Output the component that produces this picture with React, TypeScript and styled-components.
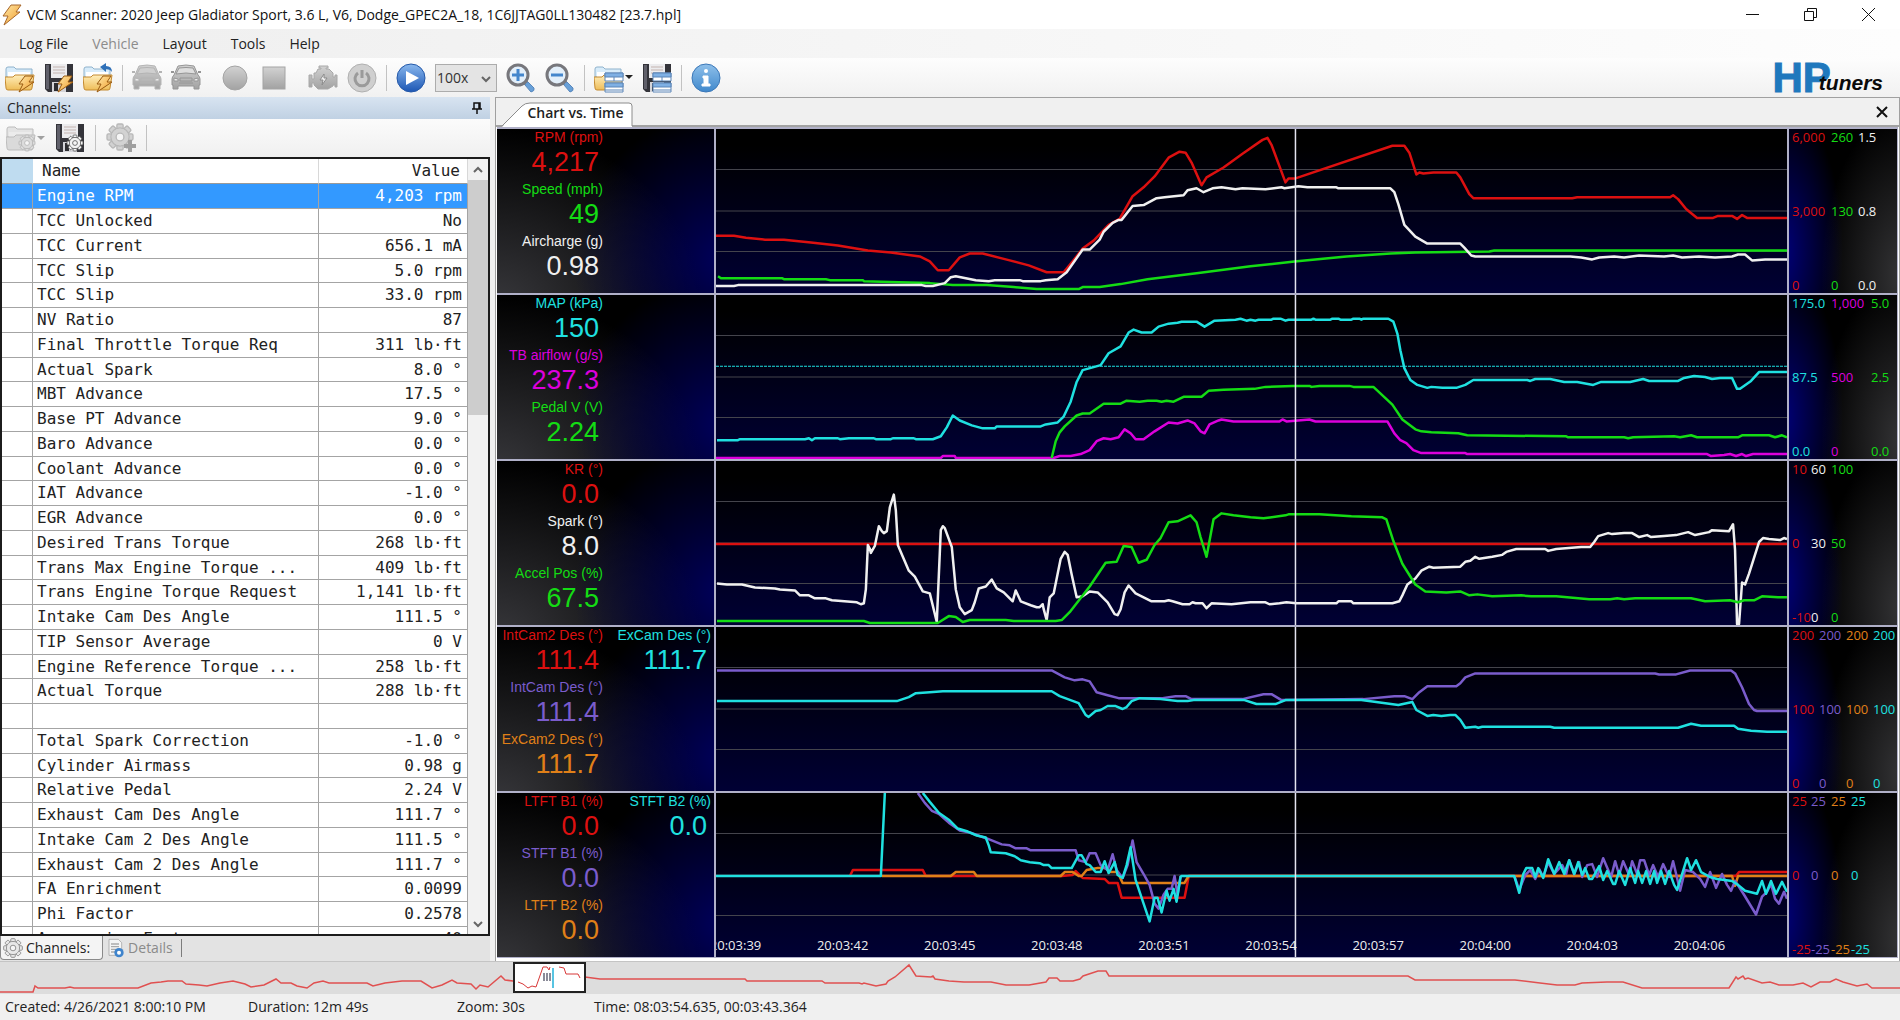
import React from "react";
import styled, { createGlobalStyle } from "styled-components";

const RED = "#dc1010";
const GREEN = "#14dc14";
const WHITE = "#f0f0f0";
const CYAN = "#1fe0e0";
const MAGENTA = "#dc00dc";
const PURPLE = "#7a5ccc";
const ORANGE = "#e08018";
const UI_FONT = `"Open Sans", "Noto Sans", sans-serif`;
const CHART_FONT = `"Liberation Sans", Arial, sans-serif`;
const MONO_FONT = `"DejaVu Sans Mono", monospace`;

const GlobalStyle = createGlobalStyle`
  *, *::before, *::after { box-sizing: border-box; }
  body { margin: 0; background: #f0f0f0; font-family: ${UI_FONT}; font-size: 14px; line-height: 18px; color: #222; }
  button, select { font: inherit; color: inherit; }
  button { padding: 0; border: 0; background: none; }
  svg { display: block; }
  h1, h2, ul, dl, dd, dt { margin: 0; padding: 0; font: inherit; }
`;

/* ---------- window frame ---------- */

const Window = styled.div`
  display: flex;
  flex-direction: column;
  height: 100vh;
  overflow: hidden;
`;

const TitleBar = styled.header`
  display: flex;
  align-items: center;
  gap: 5px;
  flex: 0 0 29px;
  padding: 0 3px 0 2px;
  background: #fff;
  color: #111;
`;

const Title = styled.h1`
  flex: 1;
  white-space: nowrap;
`;

const WindowControls = styled.div`
  display: flex;
`;

const WindowButton = styled.button`
  display: grid;
  place-items: center;
  width: 58px;
  height: 29px;
`;

const MenuBar = styled.nav`
  display: flex;
  align-items: center;
  gap: 24px;
  flex: 0 0 29px;
  padding-left: 19px;
  background: linear-gradient(to right, #f0f0f0 10%, #fdfdfd);
`;

const MenuItem = styled.button`
  &:disabled { color: #8c8c8c; }
`;

const Toolbar = styled.div`
  display: flex;
  align-items: center;
  gap: 9px;
  flex: 0 0 39px;
  padding: 0 17px 0 5px;
  background: linear-gradient(#fdfdfd, #f1f1f1);
`;

const ToolButton = styled.button<{ $menu?: boolean; $spaced?: boolean }>`
  display: flex;
  align-items: center;
  gap: 1px;
  width: ${(p) => (p.$menu ? 39 : 30)}px;
  height: 30px;
  margin-left: ${(p) => (p.$spaced ? 10 : 0)}px;
  &:disabled { color: #a0a0a0; }
`;

const Separator = styled.span`
  width: 1px;
  height: 26px;
  background: #c2c2c2;
`;

const SpeedSelect = styled.select`
  display: block;
  width: 62px;
  height: 28px;
  padding: 0 0 0 1px;
  border: 1px solid #acacac;
  border-radius: 0;
  appearance: none;
  background: #e4e4e4;
  color: #333;
`;

const SelectWrap = styled.div`
  position: relative;
  svg { position: absolute; right: 5px; top: 11px; pointer-events: none; }
`;

const Logo = styled.div`
  display: flex;
  align-items: flex-end;
  height: 32px;
  margin-left: auto;
  font-family: ${CHART_FONT};
  font-weight: 700;
`;

const LogoMain = styled.span`
  font-size: 42px;
  line-height: 32px;
  color: #1f78bd;
  -webkit-text-stroke: 1px #1f78bd;
`;

const LogoSub = styled.span`
  margin-left: -12px;
  font-size: 21px;
  line-height: 22px;
  font-style: italic;
  color: #0a0a0a;
`;

const Workspace = styled.main`
  display: flex;
  flex: 1;
  min-height: 0;
  gap: 5px;
`;

/* ---------- channels ---------- */

const ChannelsPane = styled.section`
  display: flex;
  flex-direction: column;
  flex: 0 0 490px;
  min-height: 0;
`;

const PaneHeader = styled.div`
  display: flex;
  align-items: center;
  justify-content: space-between;
  flex: 0 0 22px;
  padding: 0 7px;
  background: linear-gradient(#d8e4f1, #c0d1e3);
`;

const PaneToolbar = styled.div`
  display: flex;
  align-items: center;
  gap: 10px;
  flex: 0 0 38px;
  padding-left: 6px;
  background: linear-gradient(#fbfbfb, #f0f0f0);
`;

const TableFrame = styled.div`
  display: flex;
  flex: 1;
  min-height: 0;
  border: 2px solid #1c1c1c;
  background: #fff;
  overflow: hidden;
`;

const ChannelTable = styled.table`
  flex: 1;
  align-self: flex-start;
  table-layout: fixed;
  border-collapse: separate;
  border-spacing: 0;
  font-family: ${MONO_FONT};
  font-size: 16px;
  line-height: 22px;
  color: #222;
`;

const HeadCell = styled.th<{ $right?: boolean; $corner?: boolean }>`
  height: 25px;
  padding: 0 ${(p) => (p.$right ? 7 : 0)}px 0 9px;
  border-right: 1px solid ${(p) => (p.$corner ? "#bfdcf0" : "#d8d8d8")};
  border-bottom: 1px solid #9a9a9a;
  background: ${(p) => (p.$corner ? "#bfdcf0" : "#fff")};
  font-weight: 400;
  text-align: ${(p) => (p.$right ? "right" : "left")};
`;

const Row = styled.tr<{ $selected?: boolean }>`
  height: 25px;
  background: ${(p) => (p.$selected ? "#3399ff" : "#fff")};
  color: ${(p) => (p.$selected ? "#fff" : "inherit")};
  &:nth-child(4n) { height: 24px; }
`;

const Cell = styled.td<{ $right?: boolean }>`
  padding: 0 5px 0 4px;
  border-right: 1px solid #a4a4a4;
  border-bottom: 1px solid #a4a4a4;
  text-align: ${(p) => (p.$right ? "right" : "left")};
  white-space: nowrap;
`;

const ScrollBar = styled.div`
  display: flex;
  flex-direction: column;
  flex: 0 0 20px;
  background: #f2f2f2;
`;

const ScrollArrow = styled.button`
  display: grid;
  place-items: center;
  height: 21px;
`;

const ScrollTrack = styled.div`
  flex: 1;
`;

const ScrollThumb = styled.div`
  height: 32%;
  background: #cdcdcd;
`;

const PaneTabs = styled.div`
  display: flex;
  flex: 0 0 25px;
  align-items: stretch;
  background: #e3e3e3;
`;

const PaneTab = styled.button<{ $active?: boolean }>`
  display: flex;
  align-items: center;
  gap: 3px;
  height: 24px;
  padding: 0 ${(p) => (p.$active ? 12 : 8)}px 0 2px;
  border: ${(p) => (p.$active ? "1px solid #8a8a8a" : "0 solid #8a8a8a")};
  border-top: 0;
  border-radius: 0 0 4px 4px;
  background: ${(p) => (p.$active ? "#f4f4f4" : "none")};
  color: ${(p) => (p.$active ? "#222" : "#8a8a8a")};
`;

const TabRule = styled.span`
  width: 1px;
  height: 18px;
  margin-top: 3px;
  background: #7c7c7c;
`;

/* ---------- chart ---------- */

const ChartPane = styled.section`
  display: flex;
  flex-direction: column;
  flex: 1;
  min-width: 0;
  border: 1px solid #a0a0a0;
  border-bottom: 0;
  background: #fff;
`;

const ChartTabs = styled.div`
  display: flex;
  align-items: flex-end;
  justify-content: space-between;
  flex: 0 0 29px;
  padding: 0 8px 0 6px;
  border-bottom: 2px solid #a2a2a2;
  background: #f0f0f0;
`;

const ChartTab = styled.button`
  position: relative;
  width: 131px;
  height: 25px;
  margin-bottom: -2px;
  padding: 0 2px 3px 18px;
  font-weight: 600;
  white-space: nowrap;
  svg { position: absolute; left: 0; top: 0; z-index: 0; }
  span { position: relative; }
`;

const CloseButton = styled.button`
  display: grid;
  place-items: center;
  width: 18px;
  height: 26px;
`;

const ChartBody = styled.div`
  display: flex;
  flex-direction: column;
  flex: 1;
  min-height: 0;
  margin: 0 1px 3px;
`;

const Panel = styled.article`
  display: grid;
  grid-template-columns: 217px minmax(0, 1fr) 108px;
  flex: 1;
  min-height: 0;
  border-top: 2px solid #b0b0c8;
  border-right: 1px solid #b0b0c8;
  background: #000;
  font-family: ${CHART_FONT};
  &:last-child { border-bottom: 1px solid #b0b0c8; }
`;

const Legend = styled.dl`
  display: grid;
  grid-template-columns: 108px 108px;
  grid-template-rows: 52px 52px 52px;
  grid-auto-flow: column;
  overflow: hidden;
  background:
    radial-gradient(ellipse 70% 90% at 105% 80%, #00005c, transparent),
    radial-gradient(ellipse 95% 110% at 0% 110%, #38383c, transparent),
    #000;
`;

const LegendItem = styled.div<{ $color: string }>`
  color: ${(p) => p.$color};
  text-align: right;
  white-space: nowrap;
`;

const LegendName = styled.dt`
  padding-right: 2px;
  font-size: 14px;
  line-height: 16px;
`;

const LegendValue = styled.dd`
  padding-right: 6px;
  font-size: 27px;
  line-height: 34px;
`;

const Plot = styled.div`
  position: relative;
  min-width: 0;
  min-height: 0;
  border: solid #b0b0c8;
  border-width: 0 2px;
  background: linear-gradient(#000 10%, #000034);
  overflow: hidden;
`;

const PlotSvg = styled.svg`
  position: absolute;
  inset: 0;
  width: 100%;
  height: 100%;
`;

const TimeAxis = styled.ul`
  position: absolute;
  left: -34px;
  right: 34px;
  bottom: 3px;
  display: flex;
  list-style: none;
  font-family: ${UI_FONT};
  font-size: 13px;
  color: #eee;
  li { flex: 0 0 10%; text-align: center; }
`;

const Scales = styled.div`
  display: flex;
  flex-direction: column;
  justify-content: space-between;
  padding-left: 3px;
  overflow: hidden;
  font-family: ${UI_FONT};
  font-size: 13px;
  line-height: 16px;
  background:
    radial-gradient(ellipse 55% 90% at -5% 75%, #000078, transparent),
    radial-gradient(ellipse 75% 100% at 105% 90%, #343436, transparent),
    #000;
`;

const ScaleRow = styled.div<{ $columns: string }>`
  display: grid;
  grid-template-columns: ${(p) => p.$columns};
  white-space: nowrap;
`;

const ScaleValue = styled.span<{ $color: string }>`
  color: ${(p) => p.$color};
`;

/* ---------- footer ---------- */

const Overview = styled.div`
  position: relative;
  flex: 0 0 33px;
  border-top: 1px solid #c4c4c4;
  background: #dddddd;
`;

const OverviewSvg = styled.svg`
  width: 100%;
  height: 32px;
`;

const OverviewWindow = styled.div`
  position: absolute;
  left: 27%;
  top: 0;
  width: 73px;
  height: 31px;
  border: 2px solid #222;
  background: #fff;
`;

const StatusBar = styled.footer`
  display: grid;
  grid-template-columns: 243px 209px 137px 1fr;
  align-items: center;
  flex: 0 0 26px;
  padding-left: 5px;
`;

/* ---------- icons ---------- */

const DefsSvg = styled.svg`
  position: absolute;
`;

const Defs = () => (
  <DefsSvg width="0" height="0" aria-hidden="true">
    <defs>
      <linearGradient id="bolt" x1="0" y1="0" x2="1" y2="1">
        <stop offset="0" stopColor="#ffe9a8" />
        <stop offset="1" stopColor="#f09a28" />
      </linearGradient>
      <linearGradient id="folder" x1="0" y1="0" x2="0" y2="1">
        <stop offset="0" stopColor="#ffeebc" />
        <stop offset="1" stopColor="#eebd58" />
      </linearGradient>
      <linearGradient id="grey" x1="0" y1="0" x2="0" y2="1">
        <stop offset="0" stopColor="#d2d2d2" />
        <stop offset="1" stopColor="#a2a2a2" />
      </linearGradient>
      <linearGradient id="blue" x1="0" y1="0" x2="0" y2="1">
        <stop offset="0" stopColor="#8ab8ee" />
        <stop offset="1" stopColor="#1c56b4" />
      </linearGradient>
      <linearGradient id="sky" x1="0" y1="0" x2="0" y2="1">
        <stop offset="0" stopColor="#8fc0ea" />
        <stop offset="1" stopColor="#3f88cc" />
      </linearGradient>
    </defs>
  </DefsSvg>
);

const Bolt = () => (
  <path d="M20 13h8l-4 6h5L14 29l4-8h-4z" fill="url(#bolt)" stroke="#9a5a10" strokeLinejoin="round" />
);

type GearProps = { x: number; y: number; r: number; fill: string; stroke: string };

const Gear = ({ x, y, r, fill, stroke }: GearProps) => (
  <g transform={`translate(${x} ${y}) scale(${r / 10})`}>
    {[0, 45, 90, 135].map((a) => (
      <rect key={a} x="-2.4" y="-10" width="4.8" height="20" rx="1" fill={fill} stroke={stroke} transform={`rotate(${a})`} />
    ))}
    <circle r="7" fill={fill} stroke={stroke} />
    <circle r="6.4" fill={fill} />
    <circle r="3" fill="#f6f6f6" stroke={stroke} />
  </g>
);

const FolderShape = ({ muted }: { muted?: boolean }) => (
  <g stroke={muted ? "#bcbcbc" : "#8fb2cc"} strokeLinejoin="round">
    <path d="M1 6q0-2 2-2h6l2 2h16v8H1z" fill={muted ? "#e4e4e4" : "#d8ecfa"} />
    <path d="M3 9h22v6H3z" fill={muted ? "#ececec" : "#fff"} stroke="none" />
    <path d="M0 14h8l2-2h19l-2 13q0 2-2 2H3q-2 0-2-2z" fill={muted ? "#dadada" : "url(#folder)"} stroke={muted ? "#bcbcbc" : "#c48a30"} />
  </g>
);

const FloppyShape = () => (
  <g>
    <path d="M1 1h28v28H4l-3-3z" fill="#34343a" />
    <path d="M2 2h3v24H2z" fill="#60606a" />
    <path d="M7 1h16v14H7z" fill="#ececee" />
    <path d="M9 4h12M9 7h12M9 10h12" stroke="#c4b4b0" />
    <path d="M8 19h14v10H8z" fill="#d4d4d8" />
    <path d="M10 20h4v8h-4z" fill="#2c2c30" />
  </g>
);

const TableShape = () => (
  <g stroke="#5c86b8">
    <path d="M11 10h18v8H11zM11 20h18v9H11z" fill="#fff" />
    <path d="M11 10h18v4H11zM11 20h18v4H11z" fill="#7fb0e4" />
    <path d="M20 14v4M11 27h18" />
  </g>
);

const Icon = ({ children, size = 30 }: { children: React.ReactNode; size?: number }) => (
  <svg width={size} height={size} viewBox="0 0 30 30" fill="none" aria-hidden="true">
    {children}
  </svg>
);

const Car = ({ dark }: { dark?: boolean }) => (
  <Icon>
    <g stroke={dark ? "#969696" : "#b4b4b4"}>
      <path d="M7 3q8-2 16 0l4 9q2 2 2 4v6h-1v4h-5v-3H7v3H2v-4H1v-6q0-2 2-4z" fill="url(#grey)" />
      <path d="M8 5q7-1 14 0l3 6q-10-2-20 0z" fill={dark ? "#dedede" : "#cfcfcf"} />
      <path d="M0 9h3M27 9h3" strokeWidth="2" />
      <path d="M9 15h12v3H9zM8 20h14" fill="#b8b8b8" />
      <path d="M3 15l4 1v2H3zM27 15l-4 1v2h4z" fill="#ececec" />
    </g>
  </Icon>
);

const Magnifier = ({ plus }: { plus?: boolean }) => (
  <Icon>
    <path d="M17 20l3-3 2 2-3 3z" fill="#c8c8c8" stroke="#888" />
    <path d="M19 22q0-3 3-3l6 6q1 3-3 4z" fill="#68a0d8" stroke="#5a88bc" />
    <circle cx="12" cy="12" r="10" fill="#e3effa" stroke="#77777c" strokeWidth="3" />
    <path d={plus ? "M6 12h12M12 6v12" : "M6 12h12"} stroke="#4486cc" strokeWidth="3" />
  </Icon>
);

const Caret = () => (
  <svg width="8" height="5" viewBox="0 0 8 5" aria-hidden="true">
    <path d="M0 0h8L4 4z" fill="currentColor" />
  </svg>
);

const Chevron = ({ up, size = 12 }: { up?: boolean; size?: number }) => (
  <svg width={size} height="8" viewBox="0 0 12 8" fill="none" aria-hidden="true">
    <path d={up ? "M2 6l4-4 4 4" : "M2 2l4 4 4-4"} stroke="#666" strokeWidth="2" />
  </svg>
);

/* ---------- data ---------- */

const channels: [string, string][] = [
  ["Engine RPM", "4,203 rpm"],
  ["TCC Unlocked", "No"],
  ["TCC Current", "656.1 mA"],
  ["TCC Slip", "5.0 rpm"],
  ["TCC Slip", "33.0 rpm"],
  ["NV Ratio", "87"],
  ["Final Throttle Torque Req", "311 lb·ft"],
  ["Actual Spark", "8.0 °"],
  ["MBT Advance", "17.5 °"],
  ["Base PT Advance", "9.0 °"],
  ["Baro Advance", "0.0 °"],
  ["Coolant Advance", "0.0 °"],
  ["IAT Advance", "-1.0 °"],
  ["EGR Advance", "0.0 °"],
  ["Desired Trans Torque", "268 lb·ft"],
  ["Trans Max Engine Torque ...", "409 lb·ft"],
  ["Trans Engine Torque Request", "1,141 lb·ft"],
  ["Intake Cam Des Angle", "111.5 °"],
  ["TIP Sensor Average", "0 V"],
  ["Engine Reference Torque ...", "258 lb·ft"],
  ["Actual Torque", "288 lb·ft"],
  ["", ""],
  ["Total Spark Correction", "-1.0 °"],
  ["Cylinder Airmass", "0.98 g"],
  ["Relative Pedal", "2.24 V"],
  ["Exhaust Cam Des Angle", "111.7 °"],
  ["Intake Cam 2 Des Angle", "111.5 °"],
  ["Exhaust Cam 2 Des Angle", "111.7 °"],
  ["FA Enrichment", "0.0099"],
  ["Phi Factor", "0.2578"],
  ["Aggression Factor", "40"],
];

type Trace = { color: string; d: string; dashed?: boolean };
type PanelData = {
  legend: [string, string, string][];
  columns: string;
  scales: string[][];
  traces: Trace[];
};

const panels: PanelData[] = [
  {
    legend: [["RPM (rpm)", "4,217", RED], ["Speed (mph)", "49", GREEN], ["Aircharge (g)", "0.98", WHITE]],
    columns: "39px 27px 27px",
    scales: [["6,000", "260", "1.5"], ["3,000", "130", "0.8"], ["0", "0", "0.0"]],
    traces: [
      { color: RED, d: "0,108 18,108 30,110 49,112 68,112 95,115 122,118 152,123 175,125 204,129 214,134 222,143 233,143 244,130 254,126 267,126 290,132 313,138 331,145 348,145 357,134 367,121 378,113 393,97 404,91 417,68 428,59 439,48 453,29 464,23 470,24 476,34 486,57 491,49 508,39 527,25 547,11 552,9 556,16 570,54 573,50 580,50 677,17 689,17 694,24 701,46 704,44 708,45 718,44 741,44 745,49 754,66 758,70 857,70 862,69 955,69 958,67 963,71 971,81 982,90 998,90 1003,88 1017,88 1022,91 1027,87 1032,90 1072,90" },
      { color: GREEN, d: "2,149 5,151 66,151 68,152 110,152 114,153 147,153 148,154 183,155 214,156 237,158 271,158 298,160 321,162 363,162 367,160 384,160 405,157 432,152 481,146 535,139 579,134 631,129 675,126 700,125 774,124 779,123 1072,123" },
      { color: WHITE, d: "0,159 18,159 22,158 206,158 210,159 217,159 229,156 235,150 240,149 250,151 260,153 273,154 279,153 304,153 307,154 325,154 330,153 342,152 351,145 367,122 374,122 384,112 388,104 397,95 403,92 406,92 417,78 428,77 441,70 449,69 468,67 472,62 481,60 488,64 497,60 506,59 520,61 527,60 550,61 566,59 569,60 583,58 592,59 621,59 623,60 675,60 679,64 683,76 689,97 700,109 712,116 745,116 749,120 756,128 760,129 855,129 866,130 877,132 884,130 899,129 909,130 924,128 949,129 958,128 967,130 984,129 1000,130 1017,129 1023,127 1030,127 1037,133 1050,132 1072,132" },
    ],
  },
  {
    legend: [["MAP (kPa)", "150", CYAN], ["TB airflow (g/s)", "237.3", MAGENTA], ["Pedal V (V)", "2.24", GREEN]],
    columns: "39px 40px 27px",
    scales: [["175.0", "1,000", "5.0"], ["87.5", "500", "2.5"], ["0.0", "0", "0.0"]],
    traces: [
      { color: CYAN, dashed: true, d: "0,72 1072,72" },
      { color: MAGENTA, d: "0,165 225,165 227,163 239,163 240,165 338,165 344,163 355,163 365,161 374,157 381,148 388,145 395,146 403,144 409,136 415,140 420,146 428,146 439,138 453,129 462,130 472,127 479,130 485,138 489,140 494,131 503,127 506,126 518,128 564,128 567,126 571,128 594,126 600,128 672,128 679,140 685,147 691,150 698,157 706,160 750,160 752,161 992,161 996,163 1009,162 1015,161 1021,163 1027,161 1031,163 1038,161 1072,161" },
      { color: CYAN, d: "1,147 22,147 24,146 89,146 93,145 96,147 99,145 122,145 124,146 133,145 158,145 160,146 175,146 177,145 198,145 200,146 217,146 225,143 231,134 237,122 244,127 256,132 267,135 279,135 281,133 325,133 330,131 342,129 348,123 355,108 361,88 367,76 378,73 385,71 393,59 405,52 413,38 418,35 426,38 436,38 443,32 453,29 462,28 466,27 481,27 489,32 499,26 520,25 525,24 531,26 535,25 540,26 543,25 556,25 558,24 565,24 570,26 573,25 596,25 598,24 600,25 615,25 617,24 623,24 625,25 636,25 638,24 644,24 646,25 648,24 673,24 678,27 682,39 685,56 689,74 695,86 702,91 712,94 716,93 727,94 741,94 750,91 758,86 812,86 815,87 820,85 835,85 849,88 862,88 878,91 886,88 915,88 928,85 934,87 963,87 969,84 979,82 990,83 997,85 1005,84 1017,84 1022,95 1025,95 1036,87 1044,78 1072,78" },
      { color: GREEN, d: "336,165 340,148 344,139 349,133 361,122 367,120 374,120 388,110 405,110 411,107 424,108 432,107 441,107 446,108 451,107 458,108 468,103 486,103 493,97 508,96 539,95 550,93 577,92 594,92 596,93 604,92 634,92 638,93 658,93 677,111 687,126 700,136 706,138 716,139 743,140 752,142 851,143 853,144 909,144 913,145 918,144 959,143 965,144 976,142 982,144 1023,144 1027,142 1054,142 1060,144 1067,142 1072,144" },
    ],
  },
  {
    legend: [["KR (°)", "0.0", RED], ["Spark (°)", "8.0", WHITE], ["Accel Pos (%)", "67.5", GREEN]],
    columns: "19px 20px 27px",
    scales: [["10", "60", "100"], ["0", "30", "50"], ["-10", "0", "0"]],
    traces: [
      { color: RED, d: "0,84 1072,84" },
      { color: WHITE, d: "1,124 11,125 26,125 39,128 59,129 64,130 79,131 84,136 93,136 99,139 110,139 116,141 141,143 145,145 148,144 150,130 152,85 154,89 155,93 159,86 163,66 166,71 168,73 171,71 174,47 178,34 180,50 182,85 187,97 193,111 199,117 207,132 214,134 221,163 225,70 227,66 229,68 236,87 240,130 244,148 249,155 256,151 259,143 263,129 270,127 276,120 281,129 288,133 297,142 300,131 305,142 315,146 321,148 324,148 327,145 328,150 331,161 334,138 338,134 345,99 349,92 352,95 356,115 361,138 367,137 374,132 382,133 392,143 399,155 402,156 405,150 409,133 413,126 420,134 436,142 449,142 453,141 457,142 467,145 474,145 477,143 480,144 487,144 491,149 496,144 516,145 535,143 550,143 554,145 564,144 571,143 581,144 621,144 623,142 636,142 638,144 677,144 684,142 687,136 692,125 700,119 706,111 714,107 718,108 745,107 750,102 755,101 760,97 764,99 777,97 787,95 791,92 801,89 830,89 833,91 841,89 866,87 875,87 879,82 883,76 893,73 897,74 909,73 917,73 924,77 932,75 936,77 949,76 961,75 973,72 980,75 994,72 997,70 1014,71 1018,64 1020,90 1022,165 1024,165 1027,123 1030,125 1034,114 1044,82 1048,78 1054,79 1065,80 1069,78 1072,79" },
      { color: GREEN, d: "1,162 148,162 154,164 222,164 233,157 240,158 247,163 254,161 290,161 298,162 340,162 346,161 354,153 374,127 390,103 401,102 408,86 416,87 423,103 431,100 439,85 445,78 453,62 462,61 475,55 481,62 485,77 491,97 498,59 506,53 518,55 535,57 548,58 570,55 573,54 604,54 636,56 667,57 671,59 678,81 687,104 700,125 710,132 731,133 745,132 754,136 762,135 777,137 806,136 816,137 841,137 874,140 895,140 902,139 909,140 920,139 976,139 990,142 1015,141 1023,143 1029,141 1039,141 1047,137 1063,138 1072,138" },
    ],
  },
  {
    legend: [["IntCam2 Des (°)", "111.4", RED], ["IntCam Des (°)", "111.4", PURPLE], ["ExCam2 Des (°)", "111.7", ORANGE], ["ExCam Des (°)", "111.7", CYAN]],
    columns: "27px 27px 27px 27px",
    scales: [["200", "200", "200", "200"], ["100", "100", "100", "100"], ["0", "0", "0", "0"]],
    traces: [
      { color: PURPLE, d: "1,44 336,44 349,51 359,54 367,53 374,55 381,66 392,69 403,72 447,72 460,70 470,70 476,73 527,73 548,68 556,68 566,74 648,73 679,70 689,70 697,73 704,66 712,60 741,60 745,57 750,51 760,47 940,47 944,48 961,48 975,44 1016,44 1020,47 1027,61 1034,78 1039,84 1042,85 1072,85" },
      { color: CYAN, d: "1,75 181,75 193,71 200,67 214,66 227,65 336,65 344,70 363,77 370,89 373,91 380,85 385,84 392,80 400,80 407,83 411,81 416,75 424,72 445,73 462,75 472,75 478,74 529,74 541,78 560,78 570,74 646,74 683,79 697,76 701,84 712,90 718,89 726,90 735,89 740,89 745,94 750,102 760,101 763,102 767,101 835,101 839,102 963,102 976,98 986,100 1019,100 1023,103 1036,105 1052,106 1072,106" },
    ],
  },
  {
    legend: [["LTFT B1 (%)", "0.0", RED], ["STFT B1 (%)", "0.0", PURPLE], ["LTFT B2 (%)", "0.0", ORANGE], ["STFT B2 (%)", "0.0", CYAN]],
    columns: "19px 20px 20px 20px",
    scales: [["25", "25", "25", "25"], ["0", "0", "0", "0"], ["-25", "-25", "-25", "-25"]],
    traces: [
      { color: RED, d: "134,84 137,78 207,78 210,84 346,84 357,83 360,79 367,86 389,87 393,91 402,91 406,106 469,106 473,85 474,84 1021,84 1024,80 1072,80" },
      { color: ORANGE, d: "166,84 235,84 240,80 258,80 261,84 345,84 349,80 357,80 363,84 366,84 371,78 382,76 390,76 394,80 402,80 407,91 469,91 473,84 1017,84 1020,94 1023,84 1072,84" },
      { color: PURPLE, d: "202,0 209,10 216,18 223,21 233,30 244,38 254,40 271,46 286,52 294,53 300,56 311,56 315,58 360,58 363,68 370,70 374,61 380,61 385,73 392,78 397,62 401,78 407,86 412,73 417,48 421,70 428,82 434,93 439,112 443,117 448,103 452,97 456,97 459,84 462,103 465,84" },
      { color: PURPLE, d: "799,84 804,98 810,83 815,78 820,87 824,77 828,85 833,70 839,82 847,73 851,82 854,68 859,82 864,70 867,85 872,73 877,72 882,85 888,66 896,85 900,69 904,83 908,69 914,83 917,69 922,82 925,68 929,68 934,83 938,73 943,85 948,72 954,85 958,69 965,99 970,78 978,80 985,87 990,95 995,80 1001,96 1007,82 1012,93 1016,99 1020,89 1029,103 1041,123 1047,105 1052,100 1056,92 1060,107 1064,112 1069,100 1072,107" },
      { color: CYAN, d: "0,84 165,84 169,0" },
      { color: CYAN, d: "207,0 214,9 223,20 233,27 242,36 252,39 261,43 270,45 273,53 275,60 290,61 299,64 305,68 314,70 324,71 328,73 333,73 336,76 356,76 363,63 366,63 371,72 374,73 380,80 385,80 389,69 393,81 399,70 402,83 407,86 411,73 415,55 420,88 428,112 434,130 439,106 442,106 446,121 451,99 454,109 458,97 461,110 465,85 466,84 799,84 804,101 808,82 811,76 817,76 820,85 823,76 828,86 833,67 839,82 844,70 849,82 854,68 859,82 863,70 867,83 870,76 874,87 877,87 884,74 888,88 892,79 898,92 900,92 904,79 910,93 915,76 920,91 923,79 927,91 931,79 935,92 939,79 942,91 946,79 950,92 954,79 959,93 962,98 967,82 972,66 976,78 981,68 986,80 995,85 1002,87 1017,89 1023,93 1030,99 1042,102 1047,89 1051,102 1056,89 1061,102 1067,90 1072,100" },
    ],
  },
];

const times = ["20:03:39", "20:03:42", "20:03:45", "20:03:48", "20:03:51", "20:03:54", "20:03:57", "20:04:00", "20:04:03", "20:04:06"];

const overviewTrace =
  "0,30 33,30 35,24 38,26 65,26 70,25 74,26 138,26 151,21 161,20 168,19 182,19 186,22 199,23 207,24 220,21 233,19 245,22 251,25 264,23 276,17 281,21 291,21 297,24 307,26 314,21 323,19 329,21 367,21 373,24 385,21 402,19 421,19 432,26 442,23 452,18 457,21 471,22 476,27 480,23 488,25 501,14 505,18 513,19 585,15 600,17 745,17 747,19 822,19 825,21 859,21 862,22 864,21 876,24 886,22 888,19 895,15 909,3 916,14 931,15 933,14 935,17 949,19 964,20 991,20 1006,23 1029,23 1046,20 1049,16 1057,16 1060,19 1073,19 1080,17 1083,14 1098,9 1106,9 1109,14 1408,14 1415,18 1515,18 1540,21 1557,23 1575,23 1582,21 1607,20 1623,20 1642,26 1729,26 1736,15 1738,17 1743,14 1745,17 1748,16 1762,21 1770,20 1779,23 1793,23 1803,21 1811,25 1820,20 1830,20 1836,17 1843,20 1857,24 1867,22 1872,26 1900,26";

/* ---------- views ---------- */

const MainToolbar = () => (
  <Toolbar>
    <ToolButton aria-label="Open log"><Icon><FolderShape /><Bolt /></Icon></ToolButton>
    <ToolButton aria-label="Save log"><Icon><FloppyShape /><Bolt /></Icon></ToolButton>
    <ToolButton aria-label="Reopen log">
      <Icon>
        <FolderShape /><Bolt />
        <path d="M17 4l6-4v3q6 0 6 6-2-3-6-3v3z" fill="#2f70b8" />
      </Icon>
    </ToolButton>
    <Separator />
    <ToolButton aria-label="Connect" disabled><Car /></ToolButton>
    <ToolButton aria-label="Disconnect" disabled><Car dark /></ToolButton>
    <ToolButton aria-label="Record" disabled $spaced>
      <Icon><circle cx="15" cy="15" r="12" fill="url(#grey)" stroke="#a4a4a4" /></Icon>
    </ToolButton>
    <ToolButton aria-label="Stop" disabled>
      <Icon><rect x="4" y="4" width="22" height="22" fill="url(#grey)" stroke="#a4a4a4" /></Icon>
    </ToolButton>
    <ToolButton aria-label="Engine" disabled $spaced>
      <Icon>
        <path d="M10 6h3V5h-2V3h9v2h-2v1h3l4 4v4h2v-2h2v12h-2v-2h-2v1l-5 3H10l-4-4v-2H4v4H1V12h3v4h2v-6h2z" fill="url(#grey)" stroke="#a8a8a8" />
        <path d="M16 11l-4 6h3l-1 5 5-7h-3z" fill="#f0f0f0" stroke="#8c8c8c" />
      </Icon>
    </ToolButton>
    <ToolButton aria-label="Power" disabled>
      <Icon>
        <circle cx="15" cy="15" r="14" fill="#cfcfcf" stroke="#b0b0b0" />
        <path d="M11 10a7 7 0 1 0 8 0M15 7v8" stroke="#9a9a9a" strokeWidth="3" />
      </Icon>
    </ToolButton>
    <Separator />
    <ToolButton aria-label="Play">
      <Icon>
        <circle cx="15" cy="15" r="14" fill="url(#blue)" stroke="#2458a8" />
        <path d="M10 8l13 7-13 7z" fill="#fff" />
      </Icon>
    </ToolButton>
    <SelectWrap>
      <SpeedSelect aria-label="Playback speed" defaultValue="100x"><option>100x</option></SpeedSelect>
      <Chevron />
    </SelectWrap>
    <ToolButton aria-label="Zoom in"><Magnifier plus /></ToolButton>
    <ToolButton aria-label="Zoom out"><Magnifier /></ToolButton>
    <Separator />
    <ToolButton aria-label="Open layout" $menu><Icon><FolderShape /><TableShape /></Icon><Caret /></ToolButton>
    <ToolButton aria-label="Save layout"><Icon><FloppyShape /><TableShape /></Icon></ToolButton>
    <Separator />
    <ToolButton aria-label="Information">
      <Icon>
        <circle cx="15" cy="15" r="14" fill="url(#sky)" stroke="#3c78b8" />
        <circle cx="15" cy="8" r="2" fill="#fff" />
        <path d="M12 13h5v8h2v2h-8v-2h2v-6h-1z" fill="#fff" stroke="#fff" />
      </Icon>
    </ToolButton>
    <Logo><LogoMain>HP</LogoMain><LogoSub>tuners</LogoSub></Logo>
  </Toolbar>
);

const Channels = () => (
  <ChannelsPane>
    <PaneHeader>
      <h2>Channels:</h2>
      <button aria-label="Pin">
        <svg width="12" height="14" viewBox="0 0 12 14" fill="none" aria-hidden="true">
          <path d="M3 8V2h6v6M1 8h10M6 8v5M8 2v6" stroke="#111" strokeWidth="1.5" />
        </svg>
      </button>
    </PaneHeader>
    <PaneToolbar>
      <ToolButton aria-label="Open channels" disabled $menu>
        <Icon><FolderShape muted /><Gear x={21} y={20} r={8} fill="#dcdcdc" stroke="#b4b4b4" /></Icon><Caret />
      </ToolButton>
      <ToolButton aria-label="Save channels">
        <Icon><FloppyShape /><Gear x={20} y={20} r={8} fill="#f4f4f4" stroke="#555" /></Icon>
      </ToolButton>
      <Separator />
      <ToolButton aria-label="Add channel" disabled>
        <Icon>
          <Gear x={14} y={14} r={13} fill="#d2d2d2" stroke="#b8b8b8" />
          <path d="M18 23h12M24 17v12" stroke="#a0a0a0" strokeWidth="4" />
        </Icon>
      </ToolButton>
      <Separator />
    </PaneToolbar>
    <TableFrame>
      <ChannelTable>
        <colgroup><col style={{ width: 31 }} /><col /><col style={{ width: 149 }} /></colgroup>
        <thead>
          <tr>
            <HeadCell $corner aria-label="Marker" />
            <HeadCell scope="col">Name</HeadCell>
            <HeadCell scope="col" $right>Value</HeadCell>
          </tr>
        </thead>
        <tbody>
          {channels.map(([name, value], i) => (
            <Row key={i} $selected={i === 0}>
              <Cell />
              <Cell>{name}</Cell>
              <Cell $right>{value}</Cell>
            </Row>
          ))}
        </tbody>
      </ChannelTable>
      <ScrollBar>
        <ScrollArrow aria-label="Scroll up"><Chevron up /></ScrollArrow>
        <ScrollTrack><ScrollThumb /></ScrollTrack>
        <ScrollArrow aria-label="Scroll down"><Chevron /></ScrollArrow>
      </ScrollBar>
    </TableFrame>
    <PaneTabs>
      <PaneTab $active>
        <Icon size={20}><Gear x={15} y={15} r={14} fill="#e8e8e8" stroke="#8c8c8c" /></Icon>
        Channels:
      </PaneTab>
      <PaneTab>
        <Icon size={20}>
          <path d="M6 2h14l5 5v19H6z" fill="#f4f4f4" stroke="#999" />
          <path d="M9 9h12M9 13h12M9 17h12M9 21h8" stroke="#aaa" strokeWidth="2" />
          <circle cx="21" cy="22" r="7" fill="#3f84cc" />
          <circle cx="21" cy="22" r="3" fill="#fff" />
        </Icon>
        Details
      </PaneTab>
      <TabRule />
    </PaneTabs>
  </ChannelsPane>
);

const ChartPanel = ({ data, last }: { data: PanelData; last: boolean }) => {
  const colors = data.legend.map((item) => item[2]);
  return (
    <Panel>
      <Legend>
        {data.legend.map(([name, value, color]) => (
          <LegendItem key={name} $color={color}>
            <LegendName>{name}</LegendName>
            <LegendValue>{value}</LegendValue>
          </LegendItem>
        ))}
      </Legend>
      <Plot>
        <PlotSvg viewBox="0 0 1072 166" preserveAspectRatio="none" fill="none" aria-hidden="true">
          {[41, 83, 124].map((y) => (
            <path key={y} d={`M0 ${y}H1072`} stroke="#44444c" vectorEffect="non-scaling-stroke" />
          ))}
          {data.traces.map((t, i) => (
            <polyline
              key={i}
              points={t.d}
              stroke={t.color}
              strokeWidth={t.dashed ? 1 : 2.5}
              strokeDasharray={t.dashed ? "3 1" : undefined}
              strokeLinejoin="round"
              vectorEffect="non-scaling-stroke"
            />
          ))}
          <path d="M580 0V166" stroke="#e4e4f0" strokeWidth="1.5" vectorEffect="non-scaling-stroke" />
        </PlotSvg>
        {last && <TimeAxis>{times.map((t) => <li key={t}>{t}</li>)}</TimeAxis>}
      </Plot>
      <Scales>
        {data.scales.map((row, r) => (
          <ScaleRow key={r} $columns={data.columns}>
            {row.map((v, i) => <ScaleValue key={i} $color={colors[i]}>{v}</ScaleValue>)}
          </ScaleRow>
        ))}
      </Scales>
    </Panel>
  );
};

const Charts = () => (
  <ChartPane>
    <ChartTabs>
      <ChartTab>
        <svg width="131" height="25" viewBox="0 0 131 25" aria-hidden="true">
          <path d="M0 25L20 4q3-3 8-3h99q3 0 3 3v21z" fill="#fff" />
          <path d="M0 24L20 4q3-3 8-3h99q3 0 3 3v20" fill="none" stroke="#8c8c8c" />
        </svg>
        <span>Chart vs. Time</span>
      </ChartTab>
      <CloseButton aria-label="Close chart">
        <svg width="12" height="12" viewBox="0 0 12 12" aria-hidden="true">
          <path d="M1 1l10 10M11 1L1 11" stroke="#111" strokeWidth="2" />
        </svg>
      </CloseButton>
    </ChartTabs>
    <ChartBody>
      {panels.map((p, i) => <ChartPanel key={i} data={p} last={i === panels.length - 1} />)}
    </ChartBody>
  </ChartPane>
);

export default function App() {
  return (
    <Window>
      <GlobalStyle />
      <Defs />
      <TitleBar>
        <svg width="20" height="22" viewBox="0 0 20 22" aria-hidden="true">
          <path d="M9 1h10l-5 7h4L2 21l4-9H1z" fill="url(#bolt)" stroke="#a8682c" strokeLinejoin="round" />
        </svg>
        <Title>VCM Scanner: 2020 Jeep Gladiator Sport, 3.6 L, V6, Dodge_GPEC2A_18, 1C6JJTAG0LL130482 [23.7.hpl]</Title>
        <WindowControls>
          <WindowButton aria-label="Minimize">
            <svg width="13" height="13" viewBox="0 0 13 13" aria-hidden="true"><path d="M0 6h13v1H0z" fill="#111" /></svg>
          </WindowButton>
          <WindowButton aria-label="Restore">
            <svg width="13" height="13" viewBox="0 0 13 13" fill="none" stroke="#111" aria-hidden="true">
              <path d="M.5 3.5h9v9h-9zM3.5 3V.5h9v9H10" />
            </svg>
          </WindowButton>
          <WindowButton aria-label="Close">
            <svg width="13" height="13" viewBox="0 0 13 13" stroke="#111" aria-hidden="true"><path d="M0 0l13 13M13 0L0 13" /></svg>
          </WindowButton>
        </WindowControls>
      </TitleBar>
      <MenuBar>
        <MenuItem>Log File</MenuItem>
        <MenuItem disabled>Vehicle</MenuItem>
        <MenuItem>Layout</MenuItem>
        <MenuItem>Tools</MenuItem>
        <MenuItem>Help</MenuItem>
      </MenuBar>
      <MainToolbar />
      <Workspace>
        <Channels />
        <Charts />
      </Workspace>
      <Overview>
        <OverviewSvg viewBox="0 0 1900 32" preserveAspectRatio="none" fill="none" aria-hidden="true">
          <polyline points={overviewTrace} stroke="#e05050" strokeWidth="1.5" vectorEffect="non-scaling-stroke" />
        </OverviewSvg>
        <OverviewWindow>
          <svg width="69" height="27" viewBox="0 0 69 27" fill="none" aria-hidden="true">
            <path d="M3 18l5 2 5 4 4-2 4 1 7-20h4l2 3 1-3M44 3l5 1 2 6h12l2 4" stroke="#d83838" />
            <path d="M29 9v8M32 9v8M35 9v8" stroke="#667" strokeWidth="1.5" />
            <path d="M38 4v20" stroke="#20b0d8" strokeWidth="1.5" />
          </svg>
        </OverviewWindow>
      </Overview>
      <StatusBar>
        <span>Created: 4/26/2021 8:00:10 PM</span>
        <span>Duration: 12m 49s</span>
        <span>Zoom: 30s</span>
        <span>Time: 08:03:54.635, 00:03:43.364</span>
      </StatusBar>
    </Window>
  );
}
